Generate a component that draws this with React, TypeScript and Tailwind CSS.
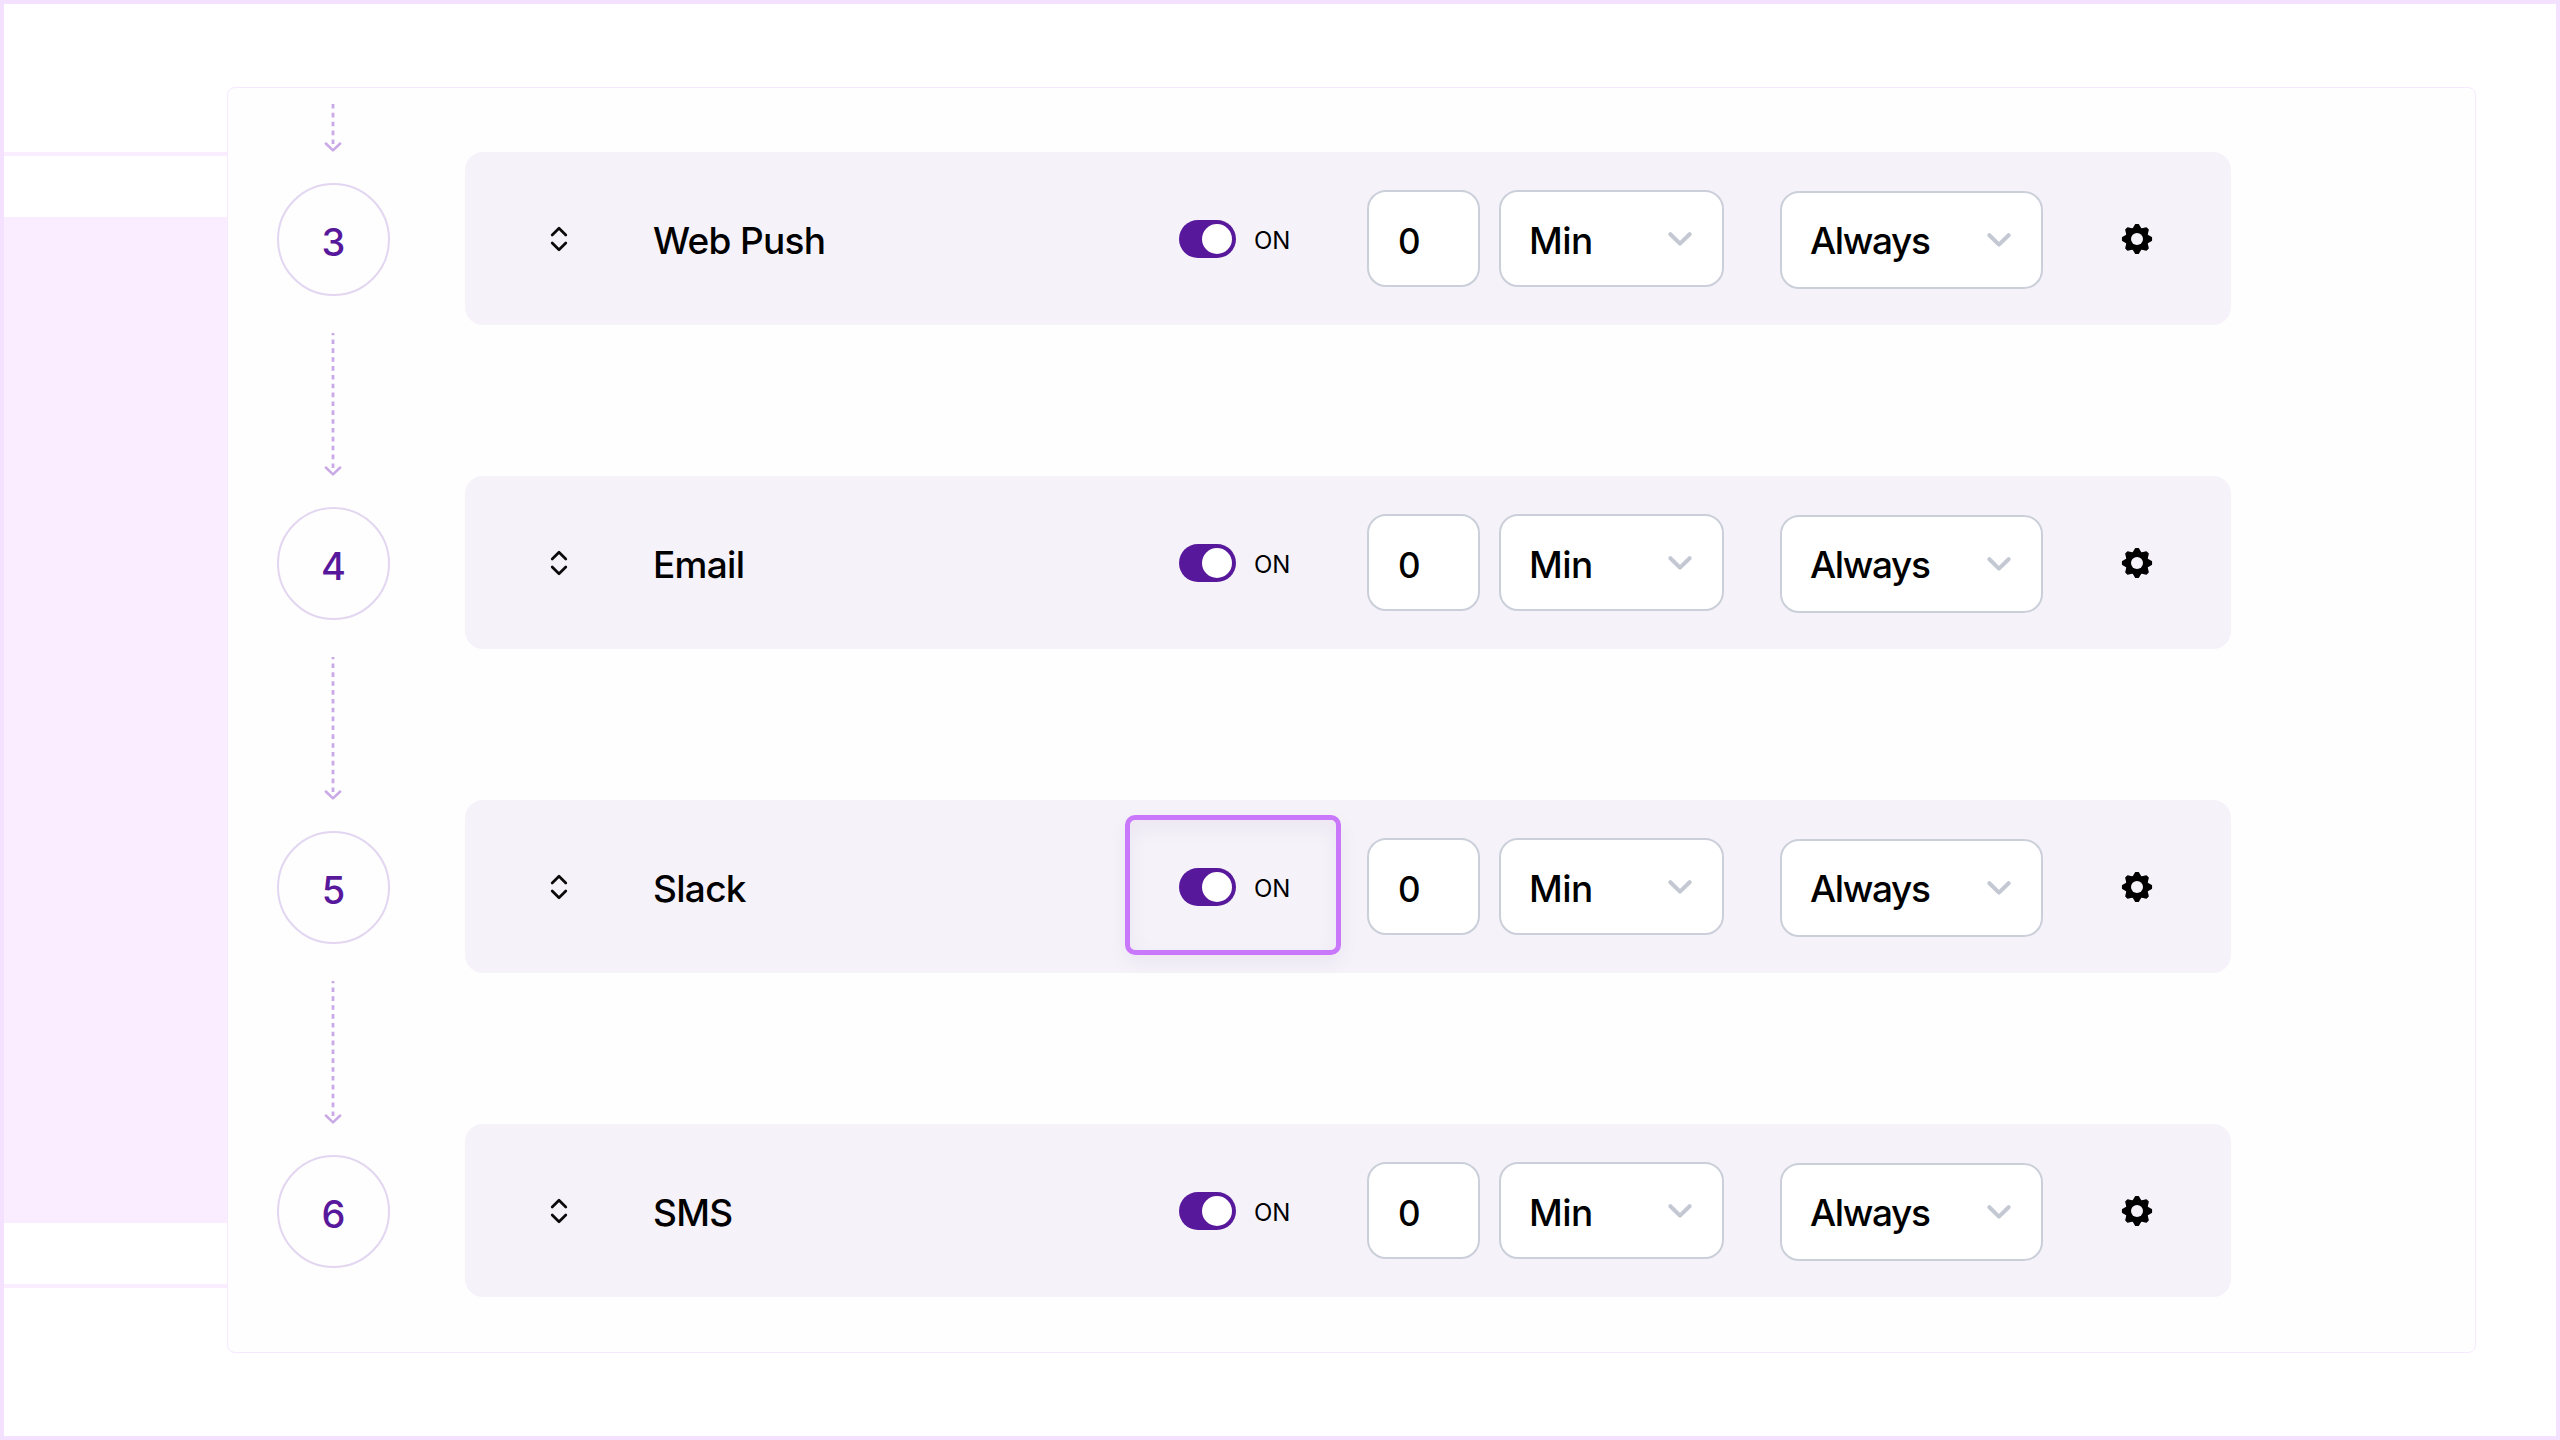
import React from "react";

const channels = [
  { step: 3, name: "Web Push", highlighted: false },
  { step: 4, name: "Email", highlighted: false },
  { step: 5, name: "Slack", highlighted: true },
  { step: 6, name: "SMS", highlighted: false },
];

function Arrow({ length }: { length: number }) {
  return (
    <svg width="20" height={length} viewBox={`0 0 20 ${length}`} fill="none" stroke="#c9a9e6" strokeWidth="2.8" className="relative -left-px">
      <path d={`M10 ${length - 9}V0`} strokeDasharray="4.6 4.25" />
      <path d={`M2.8 ${length - 9.5}L10 ${length - 2.6}L17.2 ${length - 9.5}`} strokeWidth="2.5" strokeLinecap="round" strokeLinejoin="round" />
    </svg>
  );
}

function SortIcon() {
  return (
    <svg width="20" height="28" viewBox="0 0 20 28" fill="none" stroke="#0a0a0a" strokeWidth="2.7" strokeLinecap="round" strokeLinejoin="round">
      <path d="M3.2 10L10 3.2L16.8 10M3.2 18L10 24.8L16.8 18" />
    </svg>
  );
}

function Chevron() {
  return (
    <svg width="24" height="14" viewBox="0 0 24 14" fill="none" stroke="#c3c8d2" strokeWidth="4" strokeLinecap="round" strokeLinejoin="round">
      <path d="M2.4 2.2L12 11.6L21.6 2.2" />
    </svg>
  );
}

function Gear() {
  return (
    <svg width="32" height="42" viewBox="-16 -21 32 42">
      <g fill="#000" stroke="#000" strokeWidth="1.4" strokeLinejoin="round">
        <circle r="10.6" />
        {[0, 45, 90, 135, 180, 225, 270, 315].map((a) => (
          <path key={a} d="M-4 -10L-1.3 -14.4H1.3L4 -10Z" transform={`rotate(${a})`} />
        ))}
      </g>
      <circle r="6" fill="#f5f2fa" />
    </svg>
  );
}

function Row({ name, highlighted }: { name: string; highlighted: boolean }) {
  return (
    <div className="flex h-[173px] w-[1766px] items-center rounded-[18px] bg-[#f5f2fa] text-[37px] leading-none text-black">
      <div className="ml-[84px] flex w-5">
        <SortIcon />
      </div>
      <div className="ml-[84px] w-[526px] pt-[3px] tracking-[-0.7px]">{name}</div>
      <div className="relative flex h-[38px] w-[114px] items-center">
        <div className="flex h-[38px] w-[57px] items-center justify-end rounded-full bg-[#58189c] pr-1">
          <div className="size-[30px] rounded-full bg-white" />
        </div>
        <span className="ml-[18px] pt-[4px] text-[24px] font-normal">ON</span>
        {highlighted && (
          <div className="absolute -left-[54px] -top-[53px] h-[140px] w-[216px] rounded-[10px] border-[5.5px] border-[#c978fc] shadow-[0_8px_20px_rgba(60,20,60,0.05),inset_0_8px_20px_rgba(60,20,60,0.05)]" />
        )}
      </div>
      <div className="ml-[74px] flex h-[97px] w-[113px] items-center rounded-[19px] border-2 border-[#cbcfd9] bg-white pl-[29px] pt-[5px] text-[35px]">0</div>
      <div className="ml-[19px] flex h-[97px] w-[225px] items-center justify-between rounded-[19px] border-2 border-[#cbcfd9] bg-white pl-[28px] pr-[30px]">
        <span className="pt-[3px] tracking-[-0.6px]">Min</span>
        <Chevron />
      </div>
      <div className="relative top-px ml-[56px] flex h-[98px] w-[263px] items-center justify-between rounded-[19px] border-2 border-[#cbcfd9] bg-white pl-[28px] pr-[30px]">
        <span className="pt-[2px] tracking-[-1.4px]">Always</span>
        <Chevron />
      </div>
      <div className="ml-[78px]">
        <Gear />
      </div>
    </div>
  );
}

export default function App() {
  return (
    <div className="relative flex h-[1440px] w-[2560px] overflow-hidden border-4 border-[#f4e1ff] bg-white font-['Inter',sans-serif] font-[450]">
      <div className="flex w-[223px] shrink-0 flex-col">
        <div className="mt-[148px] h-1 bg-[#f9edff]" />
        <div className="mt-[61px] h-[1006px] bg-[#f9edff]" />
        <div className="mt-[61px] h-1 bg-[#f9edff]" />
      </div>
      <div className="mt-[83px] h-[1266px] w-[2249px] shrink-0 rounded-[8px] border border-[#f6e8ff] bg-[#fefefe]">
        {channels.map((c, i) => (
          <div key={c.step} className={i === 0 ? "flex h-[237px] items-end" : "flex h-[324px] items-end"}>
            <div className="ml-[49px] flex w-[113px] flex-col items-center pb-[29px]">
              <Arrow length={i === 0 ? 50 : 144} />
              <div className="mt-[30px] flex size-[113px] items-center justify-center rounded-full border-2 border-[#e2d6f1] pt-[4px] text-[38px] font-medium leading-none text-[#58189c]">
                {c.step}
              </div>
            </div>
            <div className="ml-[75px]">
              <Row name={c.name} highlighted={c.highlighted} />
            </div>
          </div>
        ))}
      </div>
    </div>
  );
}
